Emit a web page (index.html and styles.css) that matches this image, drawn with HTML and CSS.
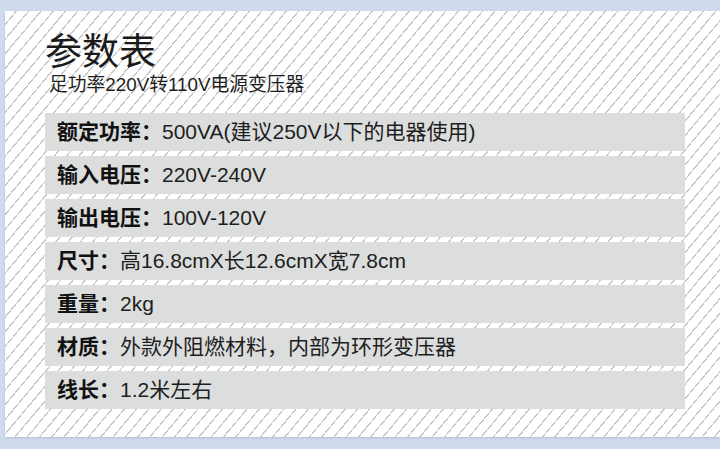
FILE: index.html
```html
<!DOCTYPE html>
<html lang="zh">
<head>
<meta charset="utf-8">
<link rel="stylesheet" href="styles.css">
</head>
<body>
<div class="panel">
  <h1 class="title">参数表</h1>
  <p class="subtitle">足功率220V转110V电源变压器</p>
  <div class="rows">
    <div class="row"><span class="label">额定功率：</span><span class="value">500VA(建议250V以下的电器使用)</span></div>
    <div class="row"><span class="label">输入电压：</span><span class="value">220V-240V</span></div>
    <div class="row"><span class="label">输出电压：</span><span class="value">100V-120V</span></div>
    <div class="row"><span class="label">尺寸：</span><span class="value">高16.8cmX长12.6cmX宽7.8cm</span></div>
    <div class="row"><span class="label">重量：</span><span class="value">2kg</span></div>
    <div class="row"><span class="label">材质：</span><span class="value">外款外阻燃材料，内部为环形变压器</span></div>
    <div class="row"><span class="label">线长：</span><span class="value">1.2米左右</span></div>
  </div>
</div>
</body>
</html>
```
FILE: styles.css
```css
html, body {
  margin: 0;
  padding: 0;
}
body {
  width: 720px;
  height: 449px;
  overflow: hidden;
  background: #cfdaec;
  font-family: "Liberation Sans", "Noto Sans CJK SC", sans-serif;
  color: #1e1e1e;
}
.panel {
  margin: 11px 0 0 5px;
  height: 426px;
  box-sizing: border-box;
  padding: 18px 0 0 40px;
  background-color: #ffffff;
  background-image: repeating-linear-gradient(130deg, #ffffff 0px, #ffffff 8.2px, #c6c6c6 8.2px, #c6c6c6 9.4px);
  box-shadow: 0 1px 2px rgba(0, 0, 0, 0.12);
}
.title {
  margin: 0;
  font-family: "Noto Sans CJK SC", sans-serif;
  font-size: 37px;
  line-height: 40px;
  font-weight: 400;
  color: #1a1a1a;
}
.subtitle {
  margin: 5px 0 0 4px;
  font-size: 18.8px;
  line-height: 22px;
  color: #1e1e1e;
}
.rows {
  margin-top: 17px;
  width: 640px;
  display: flex;
  flex-direction: column;
  gap: 5px;
}
.row {
  height: 38px;
  background: #dcdddd;
  display: flex;
  align-items: center;
  padding-left: 12px;
  font-size: 21px;
  line-height: 24px;
}
.label {
  font-weight: 700;
  color: #111111;
}
.value {
  color: #1e1e1e;
}
```
